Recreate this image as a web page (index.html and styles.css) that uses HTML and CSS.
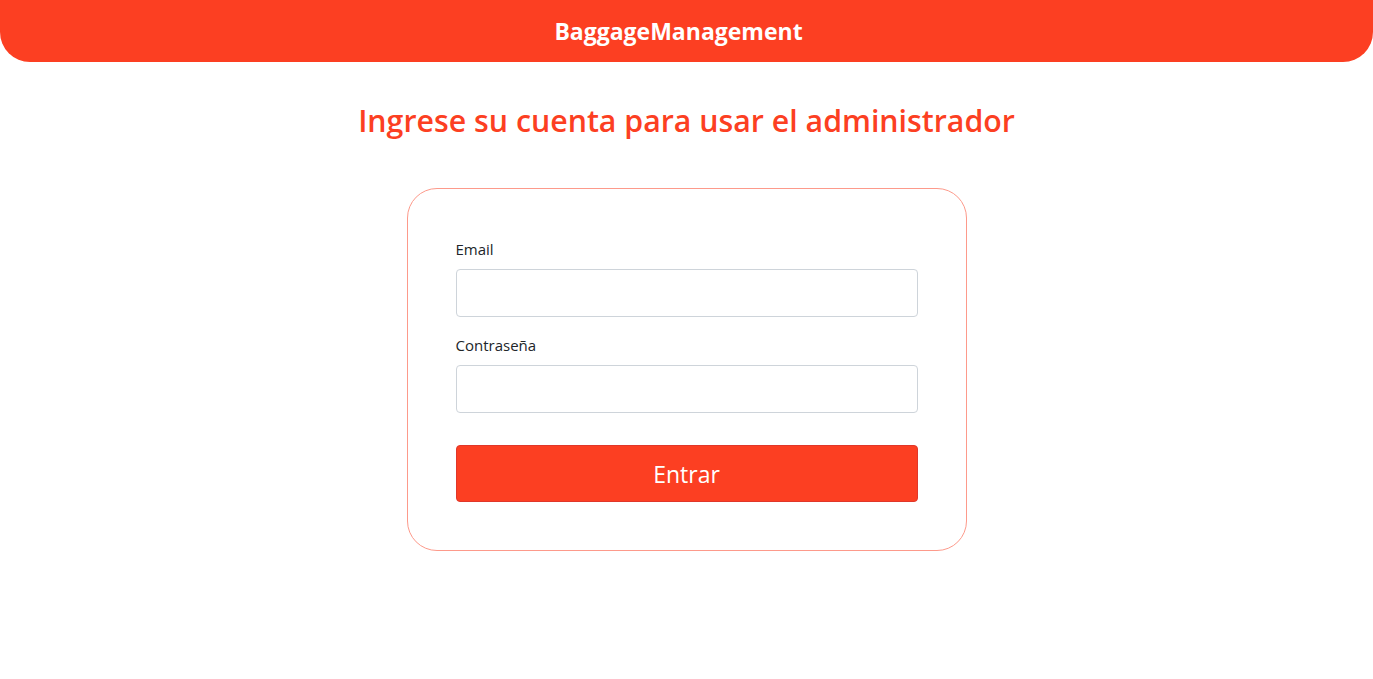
FILE: index.html
```html
<!DOCTYPE html>
<html lang="es">
<head>
<meta charset="utf-8">
<title>BaggageManagement</title>
<link rel="stylesheet" href="styles.css">
</head>
<body>
<header class="topbar">
  <span class="brand">BaggageManagement</span>
</header>
<main class="page">
  <h1 class="title">Ingrese su cuenta para usar el administrador</h1>
  <form class="card">
    <label class="label" for="email">Email</label>
    <input class="input" id="email" type="email">
    <label class="label label-2" for="pass">Contraseña</label>
    <input class="input" id="pass" type="password">
    <button class="btn" type="button">Entrar</button>
  </form>
</main>
</body>
</html>
```
FILE: styles.css
```css
* { box-sizing: border-box; }
html, body { margin: 0; padding: 0; background: #fff; }
body { font-family: "Open Sans", "Noto Sans", sans-serif; color: #212529; }

.topbar {
  height: 62px;
  background: #fc3f22;
  border-radius: 0 0 30px 30px;
  display: flex;
  align-items: center;
  justify-content: center;
}
.brand {
  color: #fff;
  font-weight: 700;
  font-size: 23px;
  margin-right: 16px;
}

.page {
  display: flex;
  flex-direction: column;
  align-items: center;
}
.title {
  margin: 39px 0 0;
  height: 40px;
  line-height: 40px;
  font-size: 30.3px;
  font-weight: 600;
  color: #fc3f22;
}

.card {
  margin-top: 47px;
  width: 560px;
  border: 1px solid #fd9a8b;
  border-radius: 30px;
  padding: 48px;
  display: flex;
  flex-direction: column;
}
.label {
  font-size: 15px;
  line-height: 24px;
  margin-bottom: 8px;
  color: #212529;
}
.label-2 { margin-top: 16px; }
.input {
  height: 48px;
  border: 1px solid #ced4da;
  border-radius: 4px;
  font-size: 16px;
  padding: 6px 12px;
}
.btn {
  margin-top: 32px;
  height: 57px;
  background: #fc3f22;
  border: 1px solid #e0372a;
  border-radius: 4px;
  color: #fff;
  font-family: inherit;
  font-size: 23px;
}
```
